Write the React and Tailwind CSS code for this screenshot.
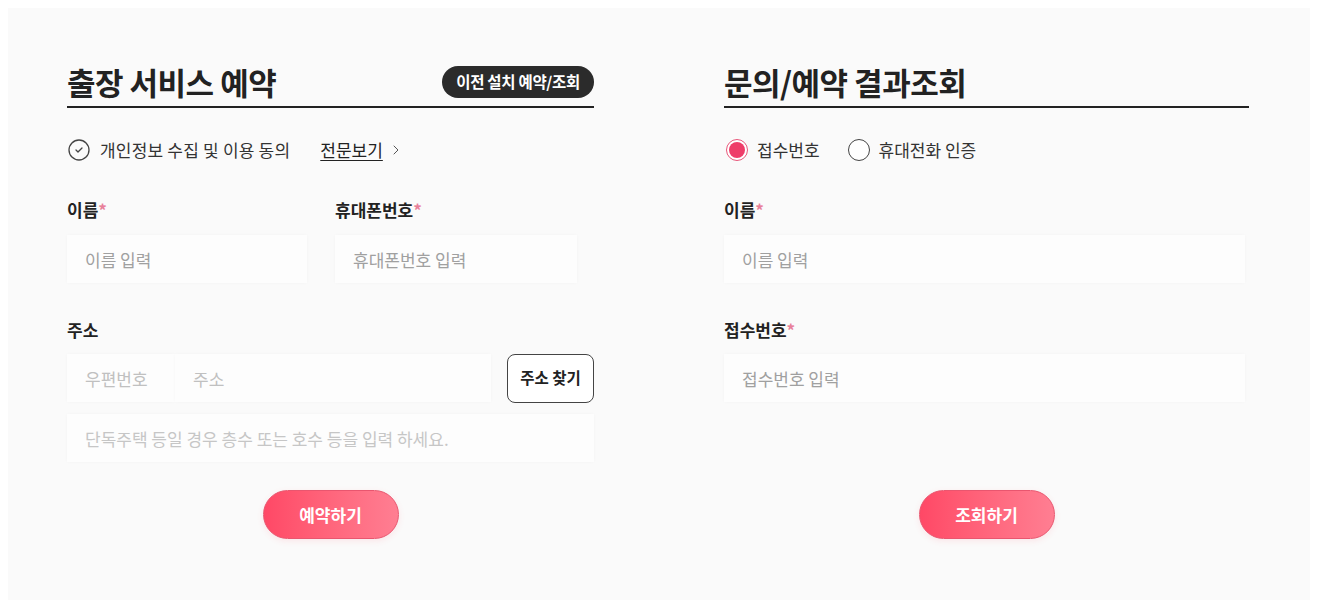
import React from 'react';
import { CircleCheck, ChevronRight } from 'lucide-react';

const inputCls =
  'h-12 w-full bg-[#fdfdfd] px-[18px] text-[17px] text-[#333] outline-none shadow-[0_0_3px_rgba(0,0,0,0.03)] placeholder:text-[#a0a0a0]';

const Label = ({ children, required }) => (
  <div className="h-6 text-[17px] font-bold leading-6 text-[#222]">
    {children}
    {required && <span className="text-[#e8809a]">*</span>}
  </div>
);

const PinkButton = ({ children }) => (
  <button className="h-[49px] w-[136px] rounded-full border border-[#e9566f] bg-gradient-to-r from-[#ff4866] to-[#ff7e92] text-[17px] font-bold text-white shadow-[0_2px_6px_rgba(255,80,110,0.12)]">
    {children}
  </button>
);

const Header = ({ title, children }) => (
  <div className="box-content flex h-[42px] items-center justify-between border-b-2 border-[#222] pb-[3px]">
    <h2 className="text-[31px] font-bold leading-[40px] tracking-[-0.5px] text-[#222]">{title}</h2>
    {children}
  </div>
);

const Radio = ({ checked, label }) => (
  <label className="flex items-center gap-[9px]">
    {checked ? (
      <span className="flex h-[22px] w-[22px] items-center justify-center rounded-full border border-[#e8577a] bg-white">
        <span className="h-[16px] w-[16px] rounded-full bg-[#ee3d69]" />
      </span>
    ) : (
      <span className="h-[22px] w-[22px] rounded-full border-[1.5px] border-[#444] bg-white" />
    )}
    <span className="text-[17px] text-[#333]">{label}</span>
  </label>
);

export default function App() {
  return (
    <div className="min-h-[609px] bg-white p-2 font-['Noto_Sans_CJK_KR','Noto_Sans',sans-serif]">
      <div className="grid h-[592px] w-[1302px] grid-cols-[527px_525px] gap-x-[130px] bg-[#fafafa] pl-[59px] pt-[53px]">
        {/* 출장 서비스 예약 */}
        <section className="flex flex-col">
          <Header title="출장 서비스 예약">
            <button className="h-8 rounded-full bg-[#2b2b2b] px-[14px] text-[15.5px] font-bold tracking-[-0.3px] text-white">
              이전 설치 예약/조회
            </button>
          </Header>

          <div className="mt-[30px] flex h-6 items-center">
            <CircleCheck size={24} strokeWidth={1.3} className="text-[#444]" />
            <span className="ml-[9px] text-[17px] tracking-[0.2px] text-[#333]">개인정보 수집 및 이용 동의</span>
            <a className="ml-[30px] text-[17px] text-[#222] underline underline-offset-[3px]">전문보기</a>
            <ChevronRight size={16} strokeWidth={1.5} className="ml-[5px] text-[#555]" />
          </div>

          <div className="mt-9 grid grid-cols-[240px_242px] gap-x-[28px]">
            <div>
              <Label required>이름</Label>
              <input className={`mt-[13px] ${inputCls}`} placeholder="이름 입력" />
            </div>
            <div>
              <Label required>휴대폰번호</Label>
              <input className={`mt-[13px] ${inputCls}`} placeholder="휴대폰번호 입력" />
            </div>
          </div>

          <div className="mt-[35px]">
            <Label>주소</Label>
          </div>
          <div className="mt-3 flex h-12 items-center">
            <input className={`${inputCls} !w-[108px] placeholder:text-[#c0c0c0]`} placeholder="우편번호" />
            <input className={`${inputCls} flex-1 placeholder:text-[#c0c0c0]`} placeholder="주소" />
            <button className="ml-[16px] h-[49px] w-[87px] shrink-0 rounded-lg border border-[#444] bg-white text-[15.5px] font-bold text-[#222]">
              주소 찾기
            </button>
          </div>
          <input
            className={`mt-3 ${inputCls} placeholder:text-[#c6c6c6]`}
            placeholder="단독주택 등일 경우 층수 또는 호수 등을 입력 하세요."
          />

          <div className="mt-7 flex justify-center">
            <PinkButton>예약하기</PinkButton>
          </div>
        </section>

        {/* 문의/예약 결과조회 */}
        <section className="flex flex-col">
          <Header title="문의/예약 결과조회" />

          <div className="mt-[30px] flex h-6 items-center gap-[28px] pl-[2px]">
            <Radio checked label="접수번호" />
            <Radio label="휴대전화 인증" />
          </div>

          <div className="mt-9">
            <Label required>이름</Label>
            <input className={`mt-[13px] ${inputCls} !w-[521px]`} placeholder="이름 입력" />
          </div>

          <div className="mt-[35px]">
            <Label required>접수번호</Label>
            <input className={`mt-3 ${inputCls} !w-[521px]`} placeholder="접수번호 입력" />
          </div>

          <div className="mt-[88px] flex justify-center">
            <PinkButton>조회하기</PinkButton>
          </div>
        </section>
      </div>
    </div>
  );
}
